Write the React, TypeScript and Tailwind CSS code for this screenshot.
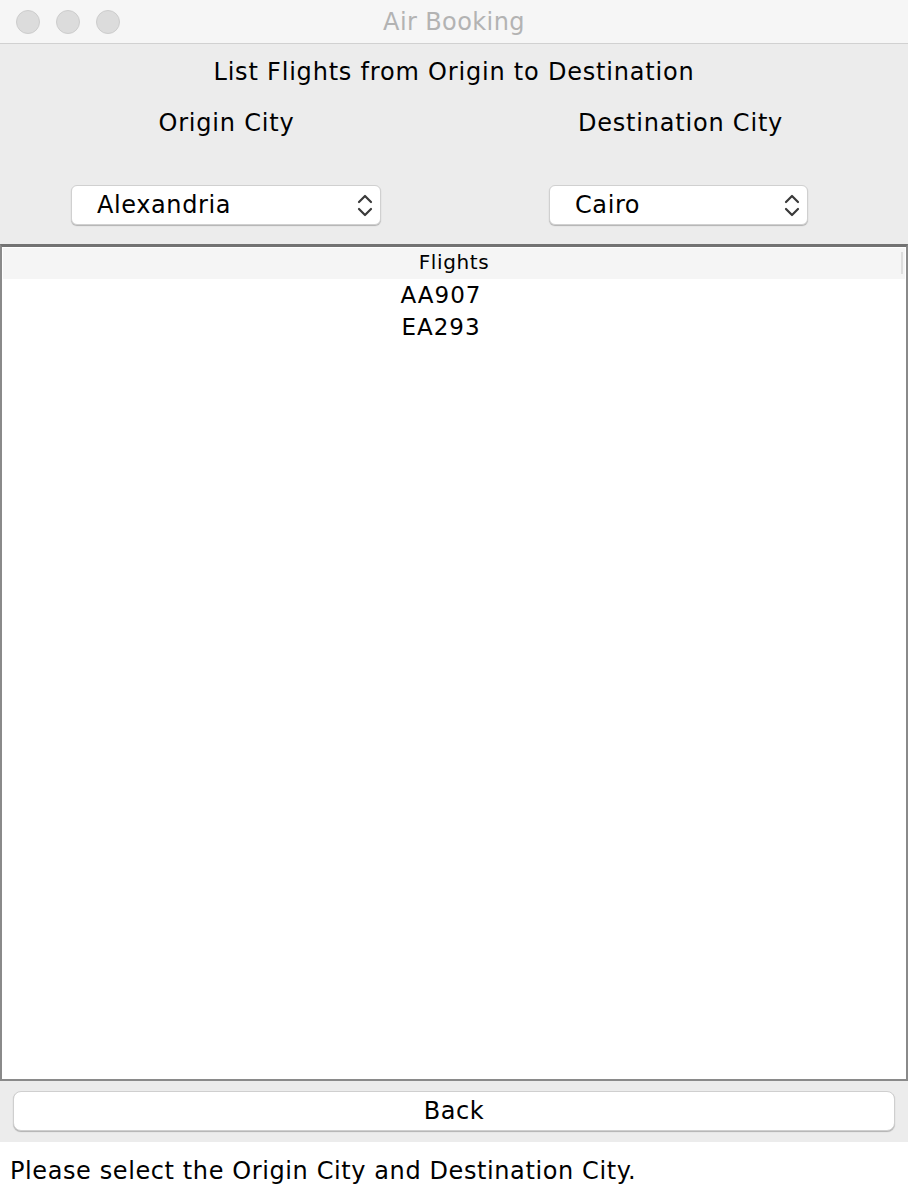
const Chevrons = () => (
  <svg width="18" height="28" viewBox="0 0 18 28" fill="none" stroke="#3a3a3a" strokeWidth="2.2" strokeLinecap="round" strokeLinejoin="round">
    <path d="M3 11 L9 5 L15 11" />
    <path d="M3 18 L9 24 L15 18" />
  </svg>
);

const Combo = ({ value, width }: { value: string; width: string }) => (
  <div className={`${width} h-[40px] bg-white rounded-[6px] border border-[#d0d0d0] shadow-[0_1px_1px_rgba(0,0,0,0.25)] flex items-center justify-between pl-[25px] pr-[6px]`}>
    <span className="text-[24px] text-black tracking-[0.6px]">{value}</span>
    <Chevrons />
  </div>
);

const flights = ["AA907", "EA293"];

export default function App() {
  return (
    <div className="w-[908px] h-[1194px] flex flex-col bg-white font-['DejaVu_Sans',sans-serif] overflow-hidden">
      {/* title bar */}
      <div className="h-[44px] shrink-0 bg-[#f6f6f6] border-b border-[#d1d1d1] relative flex items-center justify-center">
        <div className="absolute left-[16px] top-[10px] flex gap-[16px]">
          <div className="w-[24px] h-[24px] rounded-full bg-[#dcdcdc] border border-[#cdcdcd]" />
          <div className="w-[24px] h-[24px] rounded-full bg-[#dcdcdc] border border-[#cdcdcd]" />
          <div className="w-[24px] h-[24px] rounded-full bg-[#dcdcdc] border border-[#cdcdcd]" />
        </div>
        <span className="text-[24px] text-[#b3b3b3] tracking-[0.4px]">Air Booking</span>
      </div>

      {/* selection panel */}
      <div className="h-[200px] shrink-0 bg-[#ececec] flex flex-col tracking-[0.8px]">
        <div className="h-[54px] flex items-center justify-center text-[24px] text-black pt-[1px]">
          List Flights from Origin to Destination
        </div>
        <div className="flex">
          <div className="w-[453px] flex flex-col items-center">
            <div className="h-[50px] text-[24px] text-black flex items-center">Origin City</div>
          </div>
          <div className="w-[455px] flex flex-col items-center">
            <div className="h-[50px] text-[24px] text-black flex items-center">Destination City</div>
          </div>
        </div>
        <div className="flex mt-[37px]">
          <div className="pl-[71px]">
            <Combo value="Alexandria" width="w-[310px]" />
          </div>
          <div className="pl-[168px]">
            <Combo value="Cairo" width="w-[259px]" />
          </div>
        </div>
      </div>

      {/* table */}
      <div className="h-[837px] shrink-0 border-2 border-t-[3px] border-[#8a8a8a] border-t-[#727272] bg-white flex flex-col">
        <div className="h-[31px] mx-[1px] mt-[1px] bg-[#f5f5f5] flex items-center justify-center relative pb-[3px]">
          <span className="text-[20px] text-black tracking-[0.6px]">Flights</span>
          <div className="absolute right-[2px] top-[4px] w-[2px] h-[22px] bg-[#dddddd]" />
        </div>
        <div className="flex flex-col items-center pr-[26px]">
          {flights.map((f) => (
            <div key={f} className="h-[32px] flex items-center text-[23px] text-black tracking-[1px]">
              {f}
            </div>
          ))}
        </div>
      </div>

      {/* button panel */}
      <div className="h-[61px] shrink-0 bg-[#ececec] px-[13px] pt-[10px]">
        <div className="h-[40px] bg-white rounded-[8px] border border-[#cfcfcf] shadow-[0_1px_1px_rgba(0,0,0,0.25)] flex items-center justify-center text-[24px] text-black tracking-[0.6px]">
          Back
        </div>
      </div>

      {/* status */}
      <div className="pl-[10px] pt-[11px] text-[24px] text-black tracking-[0.6px]">
        Please select the Origin City and Destination City.
      </div>
    </div>
  );
}
